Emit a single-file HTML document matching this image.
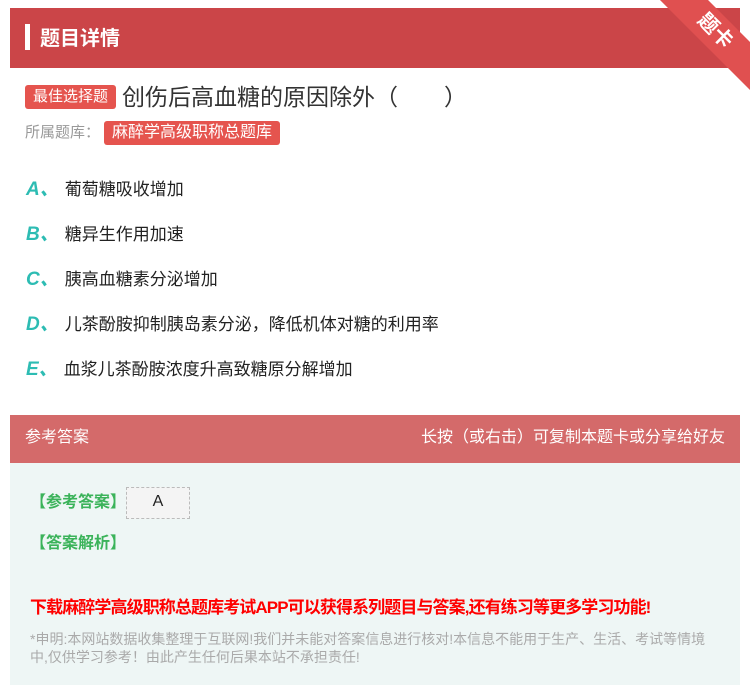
<!DOCTYPE html>
<html><head><meta charset="utf-8"><style>
body{margin:0;width:750px;height:685px;background:#fff;font-family:"Liberation Sans","Noto Sans CJK SC",sans-serif;position:relative;overflow:hidden}
.hdr{position:absolute;left:10px;top:8px;width:730px;height:60px;background:#cb4548}
.hdr .bar{position:absolute;left:15px;top:16px;width:5px;height:26px;background:#fff}
.hdr .t{position:absolute;left:30px;top:14px;color:#fff;font-size:20px;font-weight:bold}
.rib{position:absolute;width:150px;height:34px;background:#e05050;color:#fff;transform:rotate(45deg);transform-origin:center;font-size:20px;text-align:center;line-height:34px;right:-40px;top:14px;font-weight:bold}
.tag{display:inline-block;background:#e5544e;color:#fff;border-radius:3px;font-size:15px;padding:0 8px;height:24px;line-height:24px}
.q{position:absolute;left:25px;top:78px;font-size:23px;color:#333}
.q .tag{vertical-align:4px;margin-right:6px}
.lib{position:absolute;left:25px;top:121px;font-size:15px;color:#999}
.lib .tag{font-size:16px;margin-left:4px}
.opt{position:absolute;left:26px;font-size:17px;color:#222}
.opt b{color:#2dbcb3;font-style:italic;font-size:19px;margin-right:6px}
.ans{position:absolute;left:10px;top:415px;width:730px;height:270px;background:#eef6f5}
.ah{height:48px;background:#d46a6a;color:#fff;font-size:16px;line-height:46px;padding:0 15px}
.ah span{float:right}
.g{position:absolute;left:20px;color:#3bb35a;font-size:16px;font-weight:bold}
.red{position:absolute;left:20px;top:178px;color:#f00;font-size:17px;font-weight:bold;letter-spacing:-0.9px}
.note{position:absolute;left:20px;top:215px;width:690px;color:#aaa;font-size:14px;line-height:18px}
</style></head><body>
<div class="hdr"><div class="bar"></div><div class="t">题目详情</div></div>
<div class="rib">题卡</div>
<div class="q"><span class="tag">最佳选择题</span>创伤后高血糖的原因除外（　　）</div>
<div class="lib">所属题库：<span class="tag">麻醉学高级职称总题库</span></div>
<div class="opt" style="top:174px"><b>A、</b>葡萄糖吸收增加</div>
<div class="opt" style="top:219px"><b>B、</b>糖异生作用加速</div>
<div class="opt" style="top:264px"><b>C、</b>胰高血糖素分泌增加</div>
<div class="opt" style="top:309px"><b>D、</b>儿茶酚胺抑制胰岛素分泌，降低机体对糖的利用率</div>
<div class="opt" style="top:354px"><b>E、</b>血浆儿茶酚胺浓度升高致糖原分解增加</div>
<div class="ans">
<div class="ah">参考答案<span>长按（或右击）可复制本题卡或分享给好友</span></div>
<div class="g" style="top:72px">【参考答案】<span style="display:inline-block;width:62px;height:30px;background:#f4f4f4;border:1px dashed #bbb;color:#222;font-weight:normal;text-align:center;vertical-align:middle;line-height:28px">A</span></div>
<div class="g" style="top:114px">【答案解析】</div>
<div class="red">下载麻醉学高级职称总题库考试APP可以获得系列题目与答案,还有练习等更多学习功能!</div>
<div class="note">*申明:本网站数据收集整理于互联网!我们并未能对答案信息进行核对!本信息不能用于生产、生活、考试等情境中,仅供学习参考！由此产生任何后果本站不承担责任!</div>
</div>
</body></html>
